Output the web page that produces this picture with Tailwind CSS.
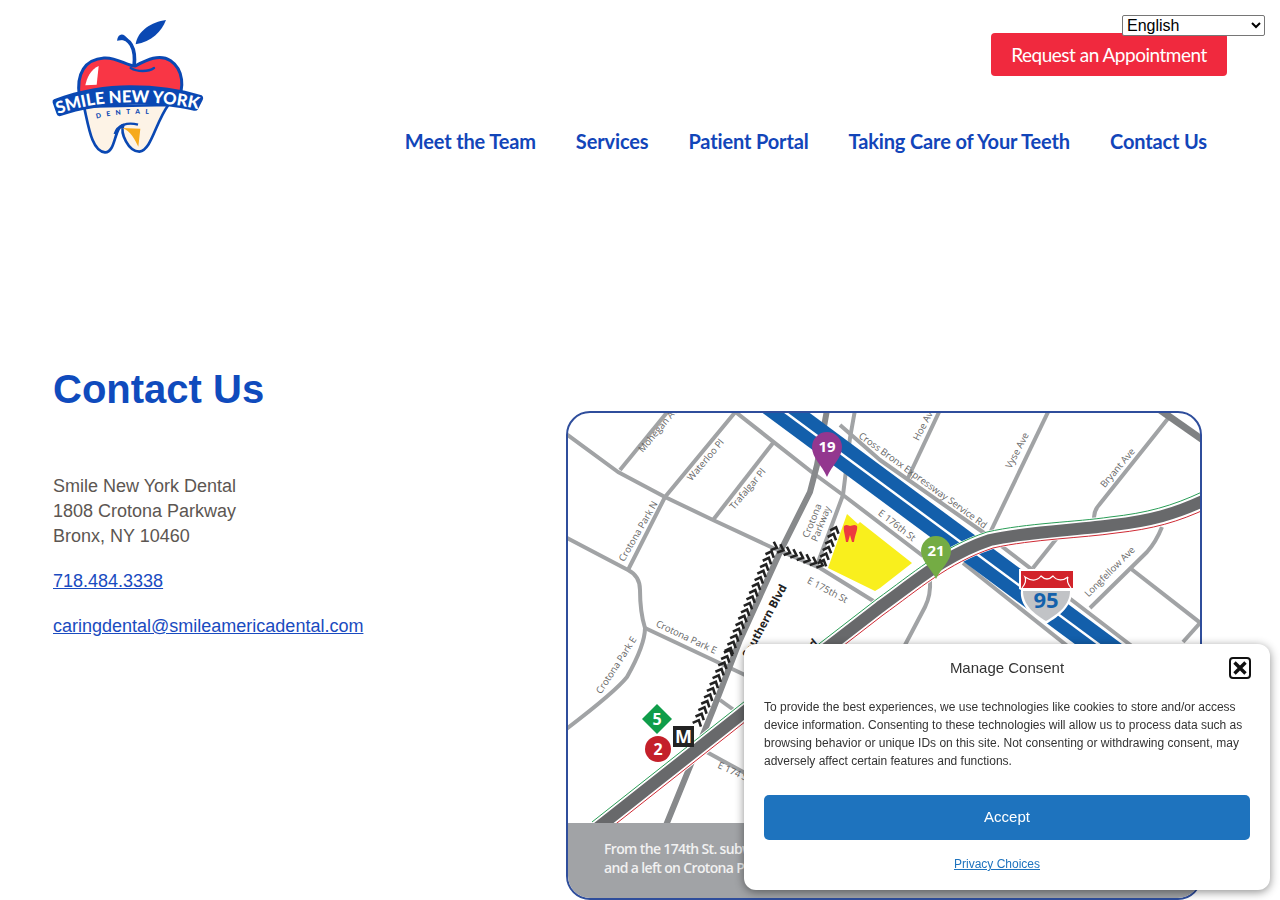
<!DOCTYPE html>
<html lang="en">
<head>
    <meta charset="UTF-8">
    <meta name="viewport" content="width=device-width, initial-scale=1.0">
    <title>Contact Us - Smile New York Dental</title>
    <script src="https://cdn.jsdelivr.net/npm/@tailwindcss/browser@4"></script>
</head>
<body class="h-[900px] overflow-hidden bg-white font-['Liberation_Sans',Arial,sans-serif]">
    <select class="absolute top-[15px] left-[1122px] w-[143px] h-[21px] z-10 bg-white border border-[#767676] rounded-[2px] text-base leading-none text-black">
        <option>English</option>
    </select>

    <header class="flex justify-between h-[170px]">
        <!-- logo -->
        <svg class="ml-10 mt-2.5 w-[180px] h-[150px] shrink-0" viewBox="0 0 540 450">
            <path d="M378,30 C335,36 292,62 287,103 C335,95 365,65 378,30 Z" fill="#0a48b3"/>
            <path d="M240,84 C266,84 290,110 282,172" fill="none" stroke="#0a48b3" stroke-width="11"/>
            <path d="M231,92 C234,68 252,68 264,88 Z" fill="#0a48b3"/>
            <path d="M118,260 C108,190 135,148 192,144 C232,141 258,168 285,168 C320,150 358,130 392,152 C430,178 435,235 410,275 Z" fill="#f93645" stroke="#0a48b3" stroke-width="9"/>
            <path d="M272,174 C292,186 325,186 342,174" fill="none" stroke="#0a48b3" stroke-width="7" stroke-linecap="round"/>
            <path d="M176,168 C152,178 140,205 136,226 L170,224 Z" fill="#fff"/>
            <path d="M132,290 C145,345 155,425 195,427 C228,428 222,350 250,345 C240,370 265,425 298,425 C335,420 345,340 385,285 Z" fill="#fdf3e6" stroke="#0a48b3" stroke-width="8" stroke-linejoin="round"/>
            <path d="M246,354 L301,356 L295,410 C285,390 272,362 246,354 Z" fill="#f6aa1c"/>
            <path d="M224,372 C232,345 262,335 294,344" fill="none" stroke="#0a48b3" stroke-width="7"/>
            <path d="M42,268 C120,238 200,226 270,226 C350,226 420,236 485,256 Q492,262 488,270 L474,298 Q470,304 462,302 C400,288 330,282 270,284 C190,286 120,298 62,318 Q52,320 50,312 L38,278 Q36,270 42,268 Z" fill="#0a48b3"/>
            <path id="logoText" d="M54,312 C130,285 200,278 265,277 C340,276 410,282 476,298" fill="none"/>
            <text font-family="Lato, 'Liberation Sans', sans-serif" font-weight="900" font-size="50" fill="#fff"><textPath href="#logoText">SMILE NEW YORK</textPath></text>
            <path id="logoSub" d="M170,326 C220,312 290,308 345,314" fill="none"/>
            <text font-family="Lato, 'Liberation Sans', sans-serif" font-weight="900" font-size="20" fill="#0a48b3" letter-spacing="16"><textPath href="#logoSub">DENTAL</textPath></text>
        </svg>

        <div class="flex flex-col items-end pt-[33px] pr-[53px]">
            <a href="#" class="flex items-center justify-center w-[236px] h-[43px] pt-px rounded-[4px] bg-[#f0293e] text-white text-[19px] tracking-[-0.5px] font-['Lato',sans-serif]">Request an Appointment</a>
            <nav class="flex gap-10 mt-[53px] pr-5 text-[#1245b9] text-xl tracking-[-0.14px] font-bold leading-6 font-['Lato',sans-serif]">
                <a href="#">Meet the Team</a>
                <a href="#">Services</a>
                <a href="#">Patient Portal</a>
                <a href="#">Taking Care of Your Teeth</a>
                <a href="#">Contact Us</a>
            </nav>
        </div>
    </header>

    <main class="flex pl-[53px] pt-[194px]">
        <section class="w-[513px] shrink-0">
            <h1 class="text-[40px] leading-[50px] font-bold text-[#0f4bbd] mb-[60px]">Contact Us</h1>
            <p class="text-lg leading-[25px] text-[#5c5652] mb-5">Smile New York Dental<br>1808 Crotona Parkway<br>Bronx, NY 10460</p>
            <p class="text-lg leading-[25px] mb-5"><a href="#" class="underline text-[#1a4bc0]">718.484.3338</a></p>
            <p class="text-lg leading-[25px]"><a href="#" class="underline text-[#1a4bc0]">caringdental@smileamericadental.com</a></p>
        </section>

        <!-- map -->
        <div class="w-[636px] h-[489px] mt-[47px] shrink-0 overflow-hidden rounded-[24px] border-2 border-[#2f4e9c] bg-white">
            <svg id="map" class="block w-[632px] h-[485px]" viewBox="568 413 632 485" font-family="'Open Sans', sans-serif">
                <g fill="none" stroke="#a1a3a5" stroke-width="4" stroke-linejoin="round">
                    <path d="M565,433 L618,472 L665,497 L713,520 L773,548 L820,568 L875,602"/>
                    <path d="M620,470 L669,410"/>
                    <path d="M628,570 L665,497 L737,410"/>
                    <path d="M713,520 L773,443"/>
                    <path d="M733,410 L813,473 L843,495 L923,556"/>
                    <path d="M963,563 L1075,652"/>
                    <path d="M855,410 L850,438 L843,495 L817,565"/>
                    <path d="M940,410 L908,478"/>
                    <path d="M1049,410 L988,537"/>
                    <path d="M1057,538 L1033,568"/>
                    <path d="M840,425 L880,460 L987,535 L1150,660"/>
                    <path d="M1170,416 L1099,505 Q1092,513 1095,522"/>
                    <path d="M1162,527 Q1156,542 1147,552 L1090,608"/>
                    <path d="M1130,568 L1203,625"/>
                    <path d="M1200,623 L1183,642"/>
                    <path d="M565,537 L628,570 Q640,576 640,590 Q640,612 645,628 Q645,645 627,677 Q615,692 565,730"/>
                    <path d="M645,628 L745,675"/>
                    <path d="M720,700 L745,718"/>
                    <path d="M703,750 L745,773"/>
                    <path d="M930,580 Q931,595 925,607 L905,645"/>
                </g>
                <path d="M1160,410 L1203,440" fill="none" stroke="#7f8183" stroke-width="7"/>

                <path d="M847,514 L828,568 L875,591 L880,588 L912,563 L860,522 L858,524 Z" fill="#f9ef1d"/>
                <path d="M844,526 C847,524 849,526 850,526 C852,526 854,524 857,526 C858,530 855,534 854,542 L852,542 L850,535 L848,542 L846,542 C845,534 843,530 844,526 Z" fill="#ed3b3e"/>

                <path d="M827,410 L817,465 L810,492 L780,552 L740,640 L713,710 L660,840" fill="none" stroke="#87898b" stroke-width="6"/>

                <path d="M770,401 L1170,697" fill="none" stroke="#135fab" stroke-width="28"/>
                <path d="M770,401 L1170,697" fill="none" stroke="#fff" stroke-width="2.5"/>

                <g fill="none">
                    <path d="M595,830 L743,713 L880,607 C915,582 945,555 990,540 C1030,531 1080,530 1113,525 C1150,521 1175,514 1205,500" stroke="#fff" stroke-width="19"/>
                    <path d="M595,830 L743,713 L880,607 C915,582 945,555 990,540 C1030,531 1080,530 1113,525 C1150,521 1175,514 1205,500" stroke="#2a9d57" stroke-width="1" transform="translate(-3,-8)"/>
                    <path d="M595,830 L743,713 L880,607 C915,582 945,555 990,540 C1030,531 1080,530 1113,525 C1150,521 1175,514 1205,500" stroke="#cf2a34" stroke-width="1" transform="translate(3,8)"/>
                    <path d="M595,830 L743,713 L880,607 C915,582 945,555 990,540 C1030,531 1080,530 1113,525 C1150,521 1175,514 1205,500" stroke="#68696b" stroke-width="12"/>
                </g>

                <g id="chevrons" fill="none" stroke="#222" stroke-width="2.6"></g>

                <path d="M827,477 C822,465 812,458 812,447 A15,15 0 0 1 842,447 C842,458 832,465 827,477 Z" fill="#93378f"/>
                <text x="827" y="452" text-anchor="middle" font-size="15" font-weight="700" fill="#fff">19</text>
                <path d="M936,579 C931,568 921,561 921,551 A15,15 0 0 1 951,551 C951,561 941,568 936,579 Z" fill="#74ac44"/>
                <text x="936" y="556" text-anchor="middle" font-size="15" font-weight="700" fill="#fff">21</text>

                <path d="M1019,569 H1074 V589 L1072,590 C1073,605 1060,616 1046,624 C1032,616 1019,605 1021,590 L1019,589 Z" fill="#fff"/>
                <path d="M1023,591 H1070 C1070,605 1058,614 1046,621 C1034,614 1023,605 1023,591 Z" fill="#c1c3c6"/>
                <rect x="1021" y="571" width="52" height="17" fill="#d2232a"/>
                <path d="M1022,588 C1026,583 1026,579 1025,577 C1031,581 1037,581 1041,576 C1045,580 1049,580 1053,576 C1057,581 1063,581 1068,577 C1067,579 1067,583 1071,588" fill="none" stroke="#fff" stroke-width="1.2"/>
                <text x="1046" y="608" text-anchor="middle" font-size="22" font-weight="700" fill="#1461ab">95</text>

                <path d="M657,704 L672,719 L657,734 L642,719 Z" fill="#0f9d4a"/>
                <text x="657" y="725" text-anchor="middle" font-size="16" font-weight="700" fill="#fff">5</text>
                <circle cx="658" cy="749" r="13" fill="#c4202a"/>
                <text x="658" y="755" text-anchor="middle" font-size="16" font-weight="700" fill="#fff">2</text>
                <rect x="673" y="726" width="21" height="21" fill="#222"/>
                <text x="683.5" y="743" text-anchor="middle" font-size="18" font-weight="700" fill="#fff">M</text>

                <g font-size="9.5" fill="#666" text-anchor="middle">
                    <text transform="translate(662,430) rotate(-50)">Mohegan Ave</text>
                    <text transform="translate(708,462) rotate(-50)">Waterloo Pl</text>
                    <text transform="translate(750,491) rotate(-50)">Trafalgar Pl</text>
                    <text transform="translate(641,533) rotate(-60)">Crotona Park N</text>
                    <text transform="translate(619,667) rotate(-57)">Crotona Park E</text>
                    <text transform="translate(685,640) rotate(25)">Crotona Park E</text>
                    <text transform="translate(815,522) rotate(-68)">Crotona</text>
                    <text transform="translate(824,525) rotate(-68)">Parkway</text>
                    <text transform="translate(895,528) rotate(38)">E 176th St</text>
                    <text transform="translate(826,593) rotate(28)">E 175th St</text>
                    <text transform="translate(921,483) rotate(36)">Cross Bronx Expressway Service Rd</text>
                    <text transform="translate(927,425) rotate(-62)">Hoe Ave</text>
                    <text transform="translate(1020,452) rotate(-62)">Vyse Ave</text>
                    <text transform="translate(1120,470) rotate(-50)">Bryant Ave</text>
                    <text transform="translate(1112,574) rotate(-45)">Longfellow Ave</text>
                    <text transform="translate(733,775) rotate(25)">E 174 St</text>
                </g>
                <g font-size="11.5" font-weight="700" fill="#222" text-anchor="middle">
                    <text transform="translate(768,623) rotate(-62)">Southern Blvd</text>
                    <text transform="translate(809,652) rotate(-40)">Blvd</text>
                </g>

                <rect x="560" y="823" width="650" height="80" fill="#a1a3a6"/>
                <g font-size="14" font-weight="600" fill="#f1f1f1" letter-spacing="-0.65">
                    <text x="604" y="854">From the 174th St. subway station, walk</text>
                    <text x="604" y="873">and a left on Crotona Place</text>
                </g>
            </svg>
        </div>
    </main>

    <!-- consent -->
    <div class="fixed left-[744px] top-[644px] w-[526px] h-[246px] rounded-xl bg-white shadow-[0_2px_10px_rgba(0,0,0,0.45)] px-5 text-[#222]">
        <div class="relative pt-[14px] h-[52px] text-[15px] leading-5 text-center text-[#333]">
            Manage Consent
            <svg class="absolute right-[-1px] top-[13px] w-[22px] h-[22px]" viewBox="0 0 22 22">
                <rect x="1" y="1" width="20" height="20" rx="3" fill="#fff" stroke="#111" stroke-width="2"/>
                <path d="M5.5,5.5 L16.5,16.5 M16.5,5.5 L5.5,16.5" stroke="#111" stroke-width="3.4"/>
            </svg>
        </div>
        <p class="mt-[2px] text-xs leading-[18px] text-[#333]">To provide the best experiences, we use technologies like cookies to store and/or access device information. Consenting to these technologies will allow us to process data such as browsing behavior or unique IDs on this site. Not consenting or withdrawing consent, may adversely affect certain features and functions.</p>
        <button class="block w-full h-[45px] mt-[25px] rounded-[5px] bg-[#1e73be] text-white text-[15px]">Accept</button>
        <div class="mt-4 pr-5 text-center text-xs leading-4"><a href="#" class="underline text-[#1e73be]">Privacy Choices</a></div>
    </div>

    <script>
        // walking route on the map, one chevron every few pixels
        const route = [[[698, 722], [730, 650], [773, 548]], [[775, 547], [822, 565]], [[823, 562], [837, 525]]];
        const group = document.getElementById('chevrons');
        route.forEach(function(line) {
            for (let i = 0; i < line.length - 1; i++) {
                const [x1, y1] = line[i];
                const [x2, y2] = line[i + 1];
                const length = Math.hypot(x2 - x1, y2 - y1);
                const angle = Math.atan2(y2 - y1, x2 - x1) * 180 / Math.PI;
                for (let d = 0; d < length; d += 7) {
                    const x = x1 + (x2 - x1) * d / length;
                    const y = y1 + (y2 - y1) * d / length;
                    const chevron = document.createElementNS('http://www.w3.org/2000/svg', 'path');
                    chevron.setAttribute('d', 'M-3,-4.5 L2,0 L-3,4.5');
                    chevron.setAttribute('transform', `translate(${x},${y}) rotate(${angle})`);
                    group.appendChild(chevron);
                }
            }
        });
    </script>
</body>
</html>
